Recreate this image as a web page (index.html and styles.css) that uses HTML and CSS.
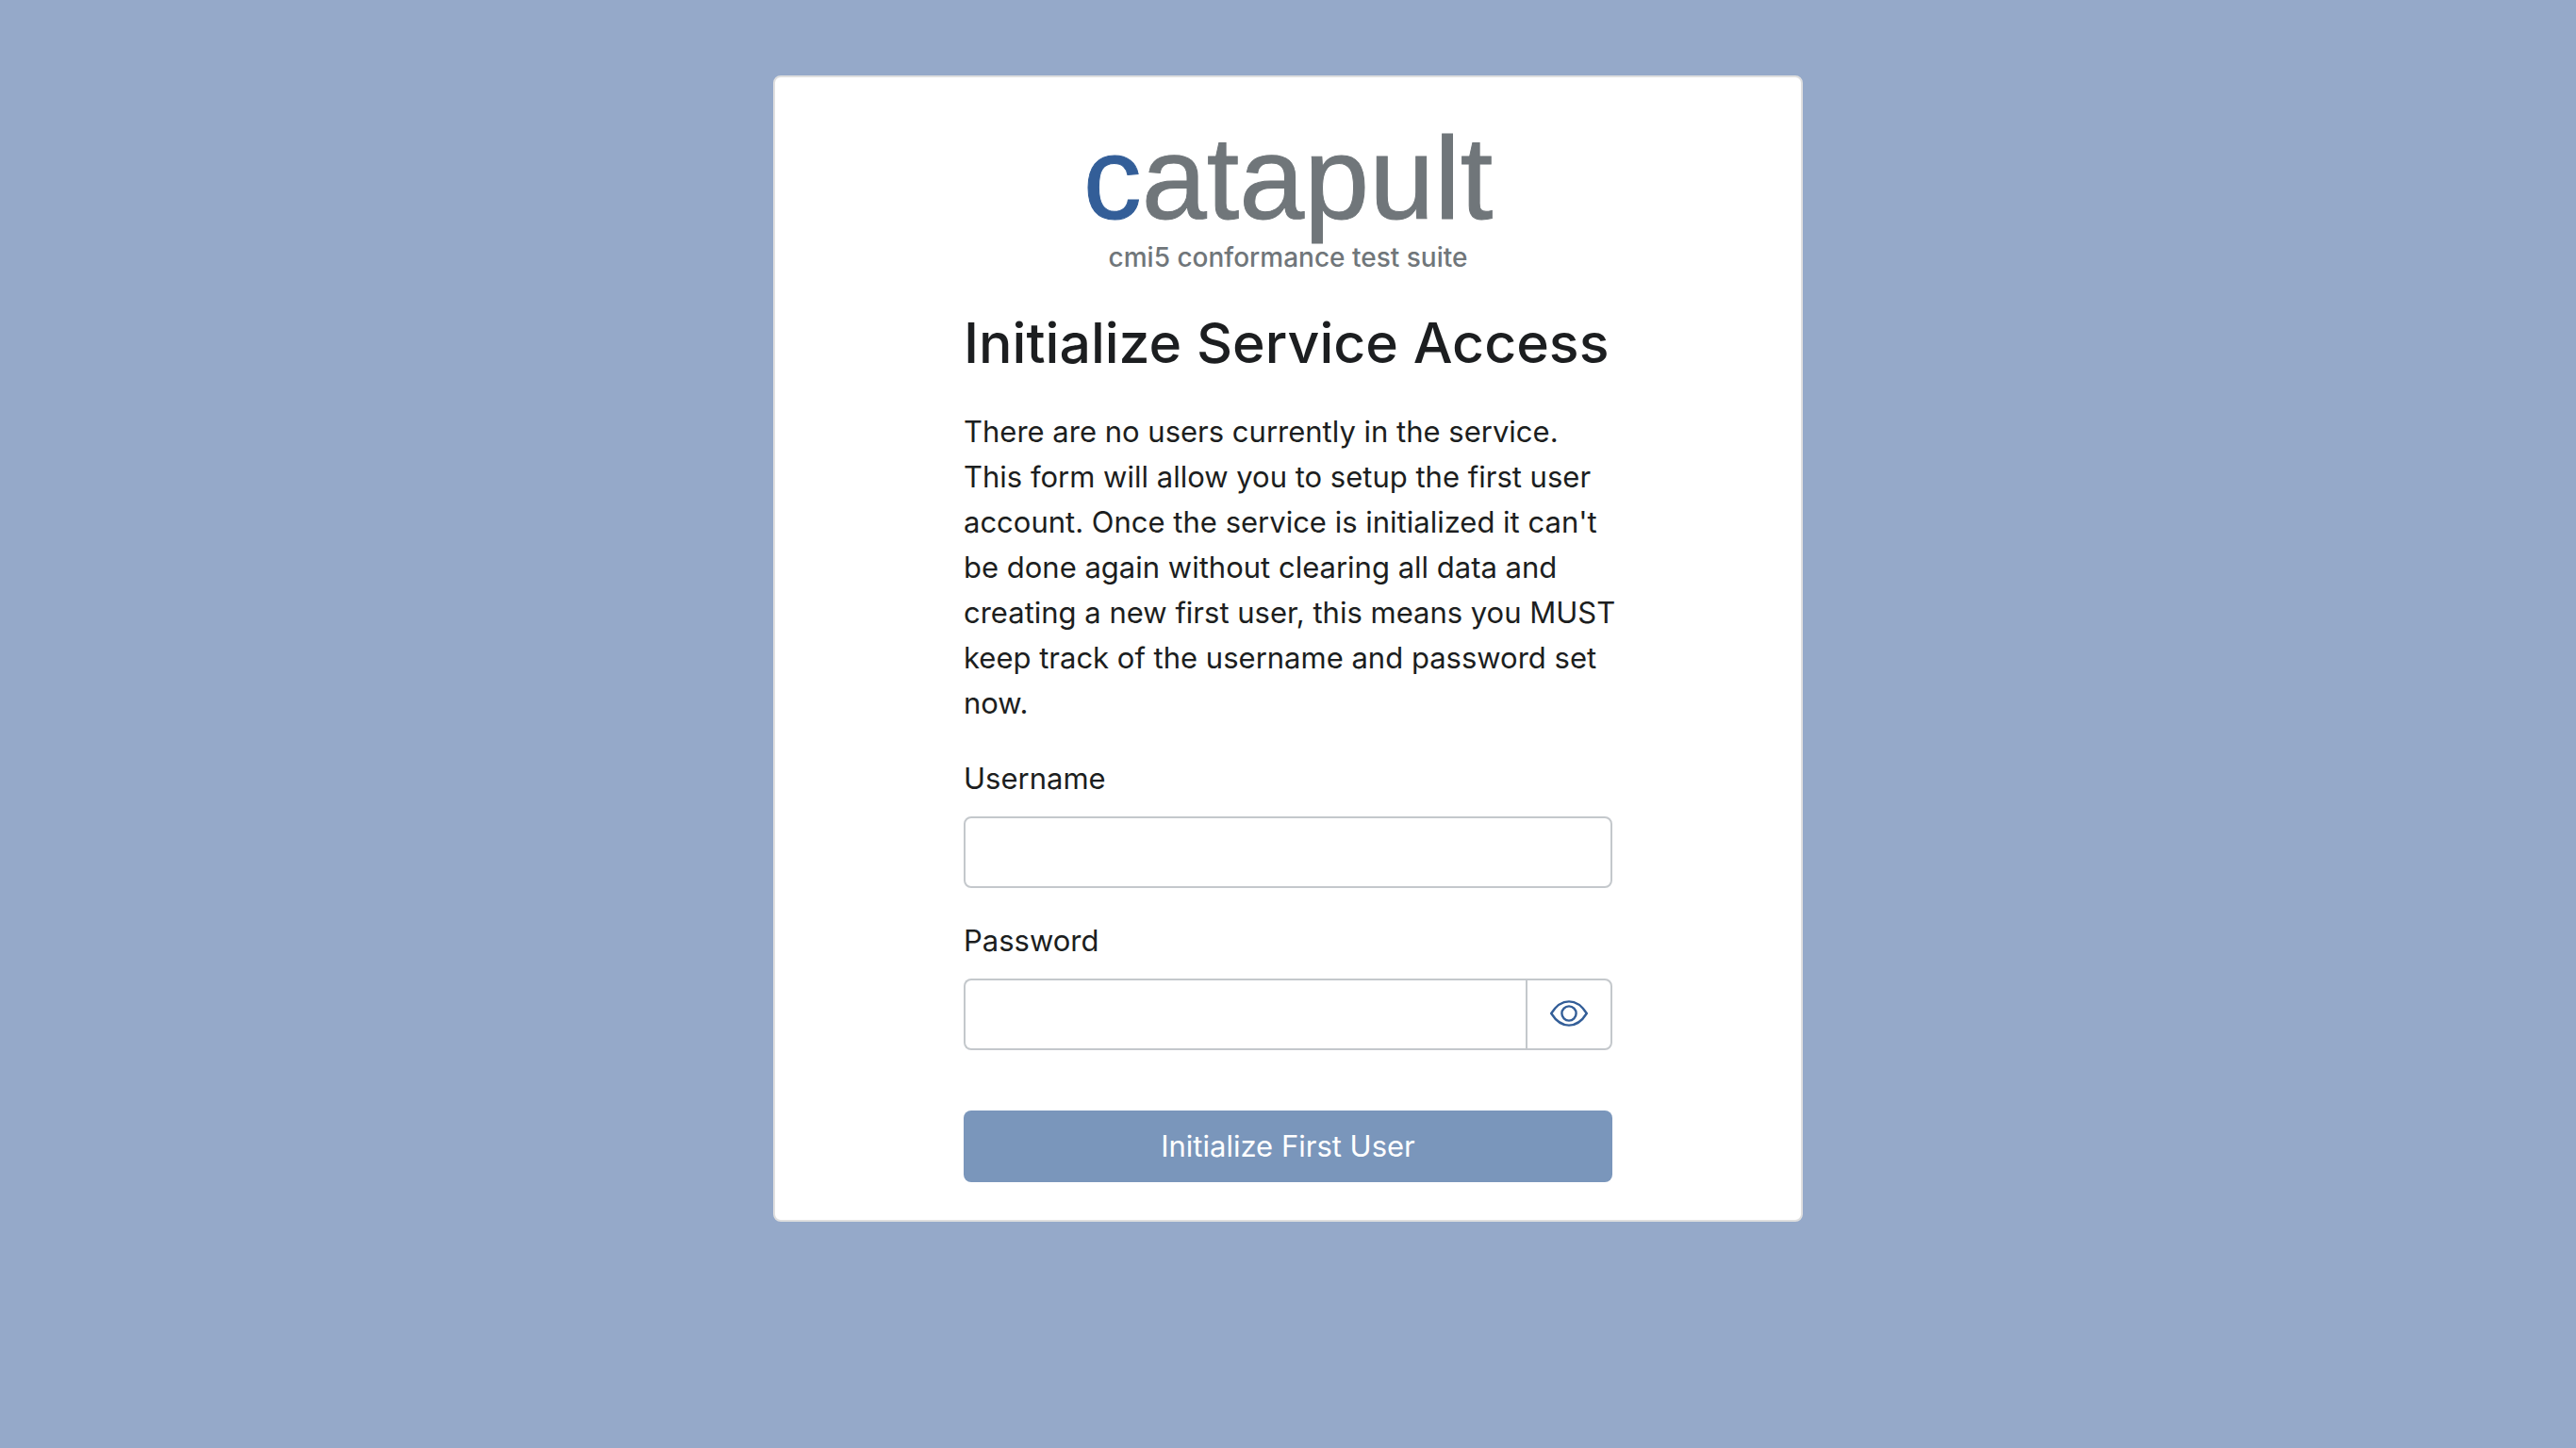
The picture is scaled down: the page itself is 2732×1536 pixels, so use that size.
FILE: index.html
```html
<!DOCTYPE html>
<html lang="en">
<head>
  <meta charset="utf-8">
  <meta name="viewport" content="width=device-width, initial-scale=1">
  <title>Catapult</title>
  <link rel="stylesheet" href="styles.css">
</head>
<body>
  <main class="card">
    <header class="brand">
      <div class="logo"><span class="logo-accent">c</span>atapult</div>
      <div class="tagline">cmi5 conformance test suite</div>
    </header>
    <form class="form">
      <h1 class="title">Initialize Service Access</h1>
      <p class="intro">There are no users currently in the service. This form will allow you to setup the first user account. Once the service is initialized it can't be done again without clearing all data and creating a new first user, this means you MUST keep track of the username and password set now.</p>
      <div class="field">
        <label for="username">Username</label>
        <input class="control" id="username" name="username" type="text">
      </div>
      <div class="field">
        <label for="password">Password</label>
        <div class="input-group">
          <input class="control" id="password" name="password" type="password">
          <button class="reveal" type="button" aria-label="Show password">
            <svg class="eye" viewBox="0 0 40 28" fill="none" stroke="currentColor" stroke-width="2.4" stroke-linejoin="round" aria-hidden="true">
              <path d="M1.2 14C4.600 8.600 11.200 1.400 20 1.400S35.400 8.600 38.800 14C35.400 19.400 28.800 26.600 20 26.600S4.600 19.400 1.200 14Z"/>
              <circle cx="20" cy="14" r="7.600"/>
            </svg>
          </button>
        </div>
      </div>
      <button class="submit" type="submit" disabled>Initialize First User</button>
    </form>
  </main>
</body>
</html>
```
FILE: styles.css
```css
* {
  box-sizing: border-box;
}

body {
  margin: 0;
  padding: 80px 24px;
  background: #95a9c9;
  color: #1c1e20;
  font-family: Inter, "Liberation Sans", sans-serif;
  font-size: 31px;
  line-height: 48px;
}

.card {
  width: 100%;
  max-width: 1092px;
  margin: 0 auto;
  padding: 48px 40px 40px;
  background: #fff;
  border: 2px solid #dfdfdf;
  border-radius: 8px;
}

.brand {
  color: #70767a;
  text-align: center;
}

.logo {
  font-family: "Liberation Sans", Arial, sans-serif;
  font-size: 124px;
  line-height: 118px;
  -webkit-text-stroke: 1px currentColor;
}

.logo-accent {
  color: #335e98;
}

.tagline {
  margin-top: 6px;
  font-size: 28px;
  font-weight: 500;
  line-height: 38px;
}

.form {
  display: flex;
  flex-direction: column;
  gap: 32px;
  max-width: 688px;
  margin: 34px auto 0;
}

.title {
  margin: 0;
  font-size: 59px;
  font-weight: 500;
  line-height: 76px;
}

.intro {
  margin: 0 -8px 0 0;
}

.field {
  display: flex;
  flex-direction: column;
  gap: 16px;
}

.control {
  width: 100%;
  min-width: 0;
  height: 76px;
  padding: 12px 24px;
  background: #fff;
  border: 2px solid #c4c8cc;
  border-radius: 8px;
  color: inherit;
  font: inherit;
}

.input-group {
  display: flex;
}

.input-group .control {
  flex: 1;
  border-right: 0;
  border-radius: 8px 0 0 8px;
}

.reveal {
  display: flex;
  align-items: center;
  justify-content: center;
  width: 92px;
  padding: 0 0 2px;
  background: #fff;
  border: 2px solid #c4c8cc;
  border-radius: 0 8px 8px 0;
  color: #335e98;
}

.eye {
  width: 40px;
  height: 28px;
}

.submit {
  height: 76px;
  margin-top: 32px;
  padding: 0 24px;
  background: #7a96bb;
  border: 0;
  border-radius: 8px;
  color: #fff;
  font: inherit;
}
```
